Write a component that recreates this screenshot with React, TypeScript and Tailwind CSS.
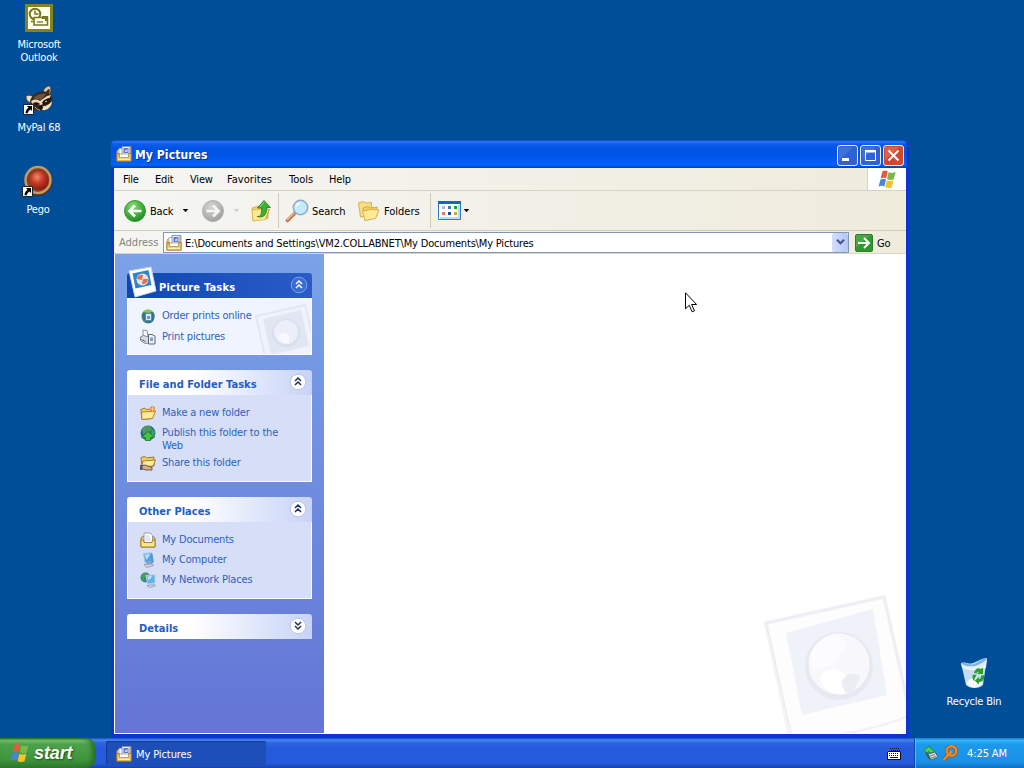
import React from "react";

const PicturesIcon = ({ className = "size-4" }: { className?: string }) => (
  <svg viewBox="0 0 16 16" className={className}>
    <path d="M1 5l1.500-1.500H5V2h2V.5h8V12H1z" fill="#e9cf95" stroke="#b9954f" strokeWidth=".8" />
    <path d="M3 2.500h4.500v6.500H3z" fill="#fff" stroke="#9aa1b8" strokeWidth=".7" />
    <path d="M6 .5h8V9H6z" fill="#eef1fc" stroke="#7f89b0" strokeWidth=".9" />
    <path d="M7.500 2h5v5h-5z" fill="#5a78c6" />
    <path d="M9 4.500L11.500 3v3H9z" fill="#c4d5f7" />
    <path d="M.8 7.500h2.400V10h9.300V7.500h2.700v7.700H.8z" fill="#f4c968" stroke="#a8752a" strokeWidth=".9" />
    <path d="M3.500 8h9v3.500h-9z" fill="#fffef8" stroke="#9c8a62" strokeWidth=".7" />
    <path d="M2 13.400h12" stroke="#fff0b5" strokeWidth="1.200" />
  </svg>
);

const WindowsFlag = ({ className }: { className: string }) => (
  <svg viewBox="0 0 20 20" className={className}>
    <path d="M4.600 1.500C6.800.2 8.700.4 10.300 1.600L8.600 9C7.200 7.900 5.200 7.800 2.800 9z" fill="#dd5f3c" />
    <path d="M11.200 2.100c2.100 1.200 4.100 1.300 7.300.1l-1.900 7.500c-2.300 1.100-4.800 1-7-.2z" fill="#76b944" />
    <path d="M2.500 10.200c2.100-1.200 4.100-1.200 5.900-.1l-1.700 7.200C5 16.200 3 16.200.7 17.400z" fill="#4a84de" />
    <path d="M9.300 10.700c2.100 1.200 4.600 1.200 7 .1l-1.800 7.500c-2.300 1.100-4.800 1-6.900-.3z" fill="#f5c32c" />
  </svg>
);

const Shortcut = () => (
  <svg viewBox="0 0 11 11" className="absolute bottom-0 -left-px size-[11px]">
    <path d="M.5.500h10v10H.5z" fill="#fff" stroke="#222" />
    <path d="M4 2h5v5L7.500 5.500C6 6.500 5 7.500 4.500 9.500L2.500 9C2.500 6.800 3.800 5 5.500 3.700z" fill="#000" />
  </svg>
);

const OutlookIcon = () => (
  <svg viewBox="0 0 28 28" className="size-7">
    <path d="M0 0h28v28H0z" fill="#84841a" />
    <path d="M3 3h22v22H3z" fill="#fffff0" />
    <circle cx="10" cy="10" r="5.300" fill="#fffff0" stroke="#77771a" strokeWidth="2" />
    <path d="M10 6.500V10h3.500" fill="none" stroke="#77771a" strokeWidth="1.500" />
    <path d="M9 13.500h13.500v7.500H9z" fill="#fffff0" stroke="#77771a" strokeWidth="1.600" />
    <path d="M17 12h6v5h-3v-2h-3z" fill="#77771a" />
    <path d="M12 18h6" stroke="#77771a" strokeWidth="1.300" />
    <path d="M6 17.500h2" stroke="#77771a" strokeWidth="1.300" />
  </svg>
);

const RaccoonIcon = () => (
  <svg viewBox="0 0 30 30" className="size-[30px]">
    <path d="M19 6c2-4 5-5.500 7-5 1.500 2 1.300 6-.5 10z" fill="#d6c8aa" stroke="#4d3a2c" />
    <path d="M22 7c1-2 2.500-3 3.500-3 .5 2 0 4-1 5.500z" fill="#3a2a22" />
    <path d="M2 11c2-1.500 5-1 8 1l-4 6C3 16.500 1.500 13.500 2 11z" fill="#e9dec5" stroke="#4d3a2c" />
    <path d="M6 16C8 9 14 6 20 6.500c6 .5 9 5 8.500 10-.5 5-4 8-9 9-6 1-12 0-13-4z" fill="#3d2a1f" />
    <path d="M9 13c4-4 9-5 13-4l-5 6z" fill="#6d533e" />
    <path d="M7 17c2-3 5-3 9-1l7-5 4-1-3 6-7 4-8-1z" fill="#e8d8b7" />
    <path d="M9 18c3-1.500 5-.8 7 1-3 2-5.500 1.500-7-1zM18 18c1-3 5-5 9-5 0 4-3 7-7 7z" fill="#21140f" />
    <path d="M17 21c4 1 8-1 11-5 0 6-5 10-10 9z" fill="#efdfbc" />
    <circle cx="17" cy="22.500" r="2" fill="#111" />
    <path d="M11 22c1 2 3 3 5 3" stroke="#c9a06f" fill="none" />
    <circle cx="22" cy="16.500" r=".8" fill="#eee" />
  </svg>
);

const PegoIcon = () => (
  <svg viewBox="0 0 30 32" className="h-8 w-[30px]">
    <defs>
      <radialGradient id="pego" cx=".4" cy=".32" r=".7">
        <stop offset="0" stopColor="#f58a72" />
        <stop offset=".45" stopColor="#c73a28" />
        <stop offset="1" stopColor="#87180f" />
      </radialGradient>
    </defs>
    <ellipse cx="15.500" cy="16" rx="14" ry="14.800" fill="#5d2f17" />
    <ellipse cx="15" cy="15" rx="12.500" ry="13" fill="#84401f" stroke="#c49a6b" strokeWidth="2.500" />
    <circle cx="16" cy="15.500" r="9.500" fill="url(#pego)" />
  </svg>
);

const RecycleIcon = () => (
  <svg viewBox="0 0 28 32" className="h-8 w-7">
    <path d="M1 6c5-2 8 2 12 0 4-1 8-5 14-5l-4 27c-4 4-13 4-17 0z" fill="#c3ddf2" />
    <path d="M1 6c6-1 8 3 13 1s8-6 13-6l-2 7c-8 4-17 3-23 0z" fill="#7fb0e0" />
    <path d="M1 6c5 5 17 5 26-4l-1 9C18 14 9 14 2 11z" fill="#eff8ff" opacity=".85" />
    <path d="M6 26c5-7 13-7 17 0-4 6-13 6-17 0z" fill="#fff" opacity=".85" />
    <path d="M14 16c1-4 4-6 7-4l2-1.500V17h-6l2-2c-1-.8-2 0-2.500 1.500z" fill="#2f9e2b" />
    <path d="M24 18c1 5-2 7-5 7v2.500L14.500 23.500 19 20v2.200c1.500-.2 2-1.700 2-3.500z" fill="#2f9e2b" />
    <path d="M13 17.500l3.500.5-1.500 3-1 3c-1.500-1.500-2-4-1-6.500z" fill="#2f9e2b" />
  </svg>
);

const DesktopIcon = ({ label, children }: { label: string; children: React.ReactNode }) => (
  <div className="flex w-19 flex-col items-center gap-1.5 text-center leading-[13px] text-white">
    <div className="relative">{children}</div>
    <span className="w-15">{label}</span>
  </div>
);

const RoundArrow = ({ back = false }: { back?: boolean }) => (
  <svg viewBox="0 0 22 22" className="size-[22px]">
    <defs>
      <radialGradient id={back ? "back" : "forward"} cx=".4" cy=".3" r=".75">
        <stop offset="0" stopColor={back ? "#8fdc7e" : "#d5d5d3"} />
        <stop offset=".6" stopColor={back ? "#3fae36" : "#b6b6b4"} />
        <stop offset="1" stopColor={back ? "#1f831f" : "#9a9a98"} />
      </radialGradient>
    </defs>
    <circle cx="11" cy="11" r="10.500" fill={back ? "url(#back)" : "url(#forward)"} stroke={back ? "#3a963a" : "#b0b0ae"} />
    {back ? (
      <path d="M17.500 11H6M11 5.500L5.500 11l5.500 5.500" fill="none" stroke="#fff" strokeWidth="2.600" />
    ) : (
      <path d="M4.500 11H16M11 5.500l5.500 5.500-5.500 5.500" fill="none" stroke="#f6f6f4" strokeWidth="2.600" />
    )}
  </svg>
);

const Caret = ({ className }: { className: string }) => (
  <svg viewBox="0 0 7 4" className={`h-1 w-[7px] ${className}`}>
    <path d="M1 0h5L3.500 3z" fill="currentColor" stroke="currentColor" strokeWidth=".4" />
  </svg>
);

const UpFolderIcon = () => (
  <svg viewBox="0 0 21 24" className="h-6 w-[21px]">
    <path d="M1 9l6-2 1.500 1.500L17 7v12L2 22z" fill="#f1cf5c" stroke="#d3ab45" strokeWidth=".8" />
    <path d="M2 22L1 11l11-1 6 .5-3 10z" fill="#fbe88f" stroke="#d9b552" strokeWidth=".8" />
    <path d="M15 20l3.500-10" stroke="#c79d34" />
    <path d="M6 17.500c4 .5 5-3 4.500-8.500H6.500l6.500-7.500 6.500 7h-4c.5 6-2 11-9.500 9z" fill="#3fae35" stroke="#1f7b1d" strokeWidth=".8" />
    <path d="M9 8l4-4.500" stroke="#8bdc7c" />
  </svg>
);

const SearchIcon = () => (
  <svg viewBox="0 0 24 24" className="size-6">
    <path d="M2.500 21.500L10 14" stroke="#b87b50" strokeWidth="3.600" strokeLinecap="round" />
    <path d="M2.500 20.500L9 14" stroke="#e9b891" strokeWidth="1.500" strokeLinecap="round" />
    <circle cx="15.500" cy="8.500" r="7.200" fill="#c4eafb" stroke="#8fa9cf" strokeWidth="1.500" />
    <path d="M10.500 9c0-4 3-6 6-5-2 1-4 2-6 5z" fill="#fff" />
  </svg>
);

const FoldersIcon = () => (
  <svg viewBox="0 0 24 22" className="h-[22px] w-6">
    <path d="M1.500 3l5-1.500L8.500 3l6-.5V15l-11 2z" fill="#f8df80" stroke="#d3aa48" strokeWidth=".9" />
    <path d="M6 8l5-1.500L13 8l7-1v9L8 20.500z" fill="#f3d160" stroke="#cfa540" strokeWidth=".9" />
    <path d="M8 20.500L5.500 11 14 9.500l8 .5-3.500 8.500z" fill="#fdeb96" stroke="#d3aa48" strokeWidth=".9" />
  </svg>
);

const ViewsIcon = () => (
  <svg viewBox="0 0 23 19" className="h-[19px] w-[23px]">
    <path d="M.5.500h22v18H.5z" fill="#fff" stroke="#2d79c4" />
    <path d="M0 0h23v3H0z" fill="#1767b5" />
    <path d="M20 4h2v14h-2zM2 16h19v2H2z" fill="#b9dcf7" />
    <path d="M4 5h3v3H4z" fill="#a9b5e8" />
    <path d="M10 5h3v3h-3z" fill="#4774c5" />
    <path d="M16 5h3v3h-3z" fill="#279635" />
    <path d="M4 11h3v3H4z" fill="#e8775c" />
    <path d="M10 11h3v3h-3z" fill="#174c94" />
    <path d="M16 11h3v3h-3z" fill="#d3a23d" />
  </svg>
);

const Separator = () => <div className="h-[35px] w-px bg-[#cfcbbb]" />;

const TitleBar = () => (
  <div className="flex h-7 items-center rounded-t-[5px] bg-[linear-gradient(#0a4fc4_0,#2a7cf8_6%,#0d5cea_14%,#0054e3_30%,#0056ea_60%,#0163fb_88%,#0144c0_100%)] pr-[5px] pl-[5px] shadow-[inset_-2px_0_2px_#0838b8]">
    <PicturesIcon className="size-4" />
    <span className="mt-[3px] ml-[3px] text-[12px] font-bold tracking-[0.1px] text-white [text-shadow:1px_1px_#0a2f92]">
      My Pictures
    </span>
    <div className="mt-0.5 ml-auto flex gap-0.5">
      <svg viewBox="0 0 21 21" className="size-[21px]">
        <rect x=".5" y=".5" width="20" height="20" rx="2.500" fill="#2f62d8" stroke="#e8eefc" />
        <path d="M2 2h14L2 15z" fill="#6f9bf3" opacity=".25" />
        <path d="M5 13h7v3H5z" fill="#fff" />
      </svg>
      <svg viewBox="0 0 21 21" className="size-[21px]">
        <rect x=".5" y=".5" width="20" height="20" rx="2.500" fill="#2f62d8" stroke="#e8eefc" />
        <path d="M2 2h14L2 15z" fill="#6f9bf3" opacity=".25" />
        <path d="M5.500 6v9.500h10V6" fill="none" stroke="#fff" />
        <path d="M5 5h11v2.500H5z" fill="#fff" />
      </svg>
      <svg viewBox="0 0 21 21" className="size-[21px]">
        <rect x=".5" y=".5" width="20" height="20" rx="2.500" fill="#d2482f" stroke="#fbeae6" />
        <path d="M2 2h14L2 15z" fill="#f0987d" opacity=".35" />
        <path d="M5.500 5.500l10 10M15.500 5.500l-10 10" stroke="#fff" strokeWidth="2.100" />
      </svg>
    </div>
  </div>
);

const MenuBar = () => (
  <div className="flex h-[23px] border-b border-[#d6d2c2] bg-linear-to-r from-[#f5f5f3] to-[#efecdc]">
    <div className="flex items-center pl-[9px] text-black">
      <span className="w-8">File</span>
      <span className="w-[35px]">Edit</span>
      <span className="w-[37px]">View</span>
      <span className="w-[62px] tracking-[0.05px]">Favorites</span>
      <span className="w-10 tracking-normal">Tools</span>
      <span>Help</span>
    </div>
    <div className="ml-auto flex w-[39px] items-center justify-center border-l border-[#d6d2c2] bg-white">
      <WindowsFlag className="size-[19px]" />
    </div>
  </div>
);

const ToolBar = () => (
  <div className="flex h-10 items-center border-b border-[#d0ccbc] bg-linear-to-r from-[#f5f5f3] to-[#efecdc] pl-2.5 text-black">
    <RoundArrow back />
    <span className="mt-px ml-1 w-8">Back</span>
    <Caret className="text-black" />
    <div className="ml-[13px]">
      <RoundArrow />
    </div>
    <Caret className="mr-[11px] ml-[9px] text-[#cfcec8]" />
    <UpFolderIcon />
    <div className="ml-1.5">
      <Separator />
    </div>
    <div className="ml-1.5">
      <SearchIcon />
    </div>
    <span className="mt-px ml-[3px] w-[45px] tracking-[-0.1px]">Search</span>
    <FoldersIcon />
    <span className="mt-px ml-[3px] w-[46px] tracking-[-0.02px]">Folders</span>
    <Separator />
    <div className="ml-[7px]">
      <ViewsIcon />
    </div>
    <Caret className="ml-0.5 text-black" />
  </div>
);

const AddressBar = () => (
  <div className="flex h-[23px] items-center border-b border-[#d8d5c8] bg-linear-to-r from-[#f5f5f3] to-[#efecdc] pl-[5px] text-black">
    <span className="mt-px w-11 tracking-normal text-[#85857d]">Address</span>
    <div className="flex h-[21px] w-[686px] items-center border border-[#8198b3] bg-white pl-0.5">
      <PicturesIcon className="mt-0.5 size-4" />
      <span className="mt-[3px] ml-[3px] tracking-[-0.17px]">
        E:\Documents and Settings\VM2.COLLABNET\My Documents\My Pictures
      </span>
      <div className="ml-auto flex h-[19px] w-4 items-center justify-center rounded-xs bg-linear-to-r from-[#d3defc] to-[#b3c6f6]">
        <svg viewBox="0 0 9 6" className="h-1.5 w-[9px]">
          <path d="M1 .8l3.500 3.500L8 .8" fill="none" stroke="#3f5490" strokeWidth="2" />
        </svg>
      </div>
    </div>
    <svg viewBox="0 0 18 18" className="mt-px ml-1.5 size-[18px]">
      <rect x=".5" y=".5" width="17" height="17" rx="1.500" fill="#319531" stroke="#2b7d2b" />
      <path d="M1 1h15L1 14z" fill="#83cc76" opacity=".3" />
      <path d="M3 9h11M9 4l5 5-5 5" fill="none" stroke="#fff" strokeWidth="2" />
    </svg>
    <span className="mt-0.5 ml-1">Go</span>
  </div>
);

const Chevron = ({ dark = false, down = false }: { dark?: boolean; down?: boolean }) => (
  <svg viewBox="0 0 18 18" className="size-[18px]">
    <circle cx="9" cy="9" r="7.800" fill={dark ? "#3a6ccf" : "#fff"} stroke={dark ? "#7fa0e6" : "#b9c3df"} />
    <path
      d={down ? "M6 5l3 3 3-3M6 9l3 3 3-3" : "M6 8l3-3 3 3M6 12l3-3 3 3"}
      fill="none"
      stroke={dark ? "#fff" : "#1f2f66"}
      strokeWidth="1.500"
    />
  </svg>
);

const OrderIcon = () => (
  <svg viewBox="0 0 16 16" className="size-4">
    <ellipse cx="8" cy="8.500" rx="6.500" ry="7" fill="#3f8d72" />
    <path d="M2 6c1 6 4 9 8 9 4-1 5-5 4-10l-4-2z" fill="#3b6f92" />
    <path d="M3.500 3.500C5 1 11 1 12.500 3.500L9 5 5 4.500z" fill="#8acb45" />
    <path d="M5.500 5.500h6v7h-6z" fill="#d8edf7" stroke="#4d8fa3" />
    <path d="M7 8h3v3H7z" fill="#5e9ac6" />
  </svg>
);

const PrintIcon = () => (
  <svg viewBox="0 0 16 16" className="size-4">
    <path d="M3 1l4 .5 1 6-5 .5z" fill="#f6f8fb" stroke="#8c93a0" />
    <path d="M.5 8l3-1.500L9 8v6l-4 .5-4.500-3z" fill="#d6dbe4" stroke="#777e8c" strokeWidth=".9" />
    <path d="M8.500 5.500H12L15 7v8H8.500z" fill="#eef2f8" stroke="#5e6675" />
    <path d="M10 8.500h3V12h-3z" fill="#8b9cb9" />
    <path d="M1.500 10.500l4 2" stroke="#555d6c" />
  </svg>
);

const NewFolderIcon = () => (
  <svg viewBox="0 0 16 16" className="size-4">
    <path d="M.8 4.500L5 3l1.500 1.500L12 4v9.500L2 14.500z" fill="#f3cf62" stroke="#9d7420" strokeWidth=".9" />
    <path d="M2 14.500L1.500 7 11 6.500l4.500-.5-3 7.500z" fill="#fdea95" stroke="#a77d25" strokeWidth=".9" />
    <circle cx="12.500" cy="4" r="2.700" fill="#ef8442" />
    <path d="M12.500 2v4M10.500 4h4" stroke="#fbd29b" strokeWidth=".9" />
  </svg>
);

const PublishIcon = () => (
  <svg viewBox="0 0 16 16" className="size-4">
    <circle cx="8" cy="8" r="7.500" fill="#2b6f86" />
    <path d="M2 4c2-3 6-4 8-3l2 4-4 3-5 1zM12 4l3 3-1 5-3-2z" fill="#4a9d5f" />
    <path d="M8 6.500l6.500 6H10.500V15.500h-5v-3h-4z" fill="#45c440" stroke="#1c7b23" strokeWidth=".8" />
  </svg>
);

const ShareIcon = () => (
  <svg viewBox="0 0 16 16" className="size-4">
    <path d="M1 2.500L5 1.500 6.500 3 14 2v9L2 12z" fill="#f3cf62" stroke="#8f6d1f" strokeWidth=".9" />
    <path d="M2 12L3 6l12.500-1L13 11z" fill="#fdec9b" stroke="#9a7726" strokeWidth=".9" />
    <path d="M1 11l4-1 7 2.500V15H6l-5-1.500z" fill="#d9b186" stroke="#55402a" strokeWidth=".8" />
    <path d="M0 10h2.500v5H0z" fill="#4d5a78" />
  </svg>
);

const DocumentsIcon = () => (
  <svg viewBox="0 0 16 16" className="size-4">
    <path d="M1 6l2-1.500h10l2 1.500v9H1z" fill="#f3d264" stroke="#a17c22" />
    <path d="M4 1h6l2.500 2.500V11H4z" fill="#fff" stroke="#8c93a5" strokeWidth=".9" />
    <path d="M5.500 4h4M5.500 6h5M5.500 8h5" stroke="#b3bfd8" strokeWidth=".8" />
    <path d="M1 8h2.500L4 10.500h8L12.500 8H15v7H1z" fill="#fbe48a" stroke="#a17c22" strokeWidth=".9" />
  </svg>
);

const ComputerIcon = () => (
  <svg viewBox="0 0 16 16" className="size-4">
    <path d="M3.500 1.500L12 .8l1.500 9-8.500.7z" fill="#4ea4e6" stroke="#b3c0dc" />
    <path d="M4.500 2.500l6-.5-4 6z" fill="#b5e0fb" />
    <path d="M11 2l1.500.5 1 8-2 1z" fill="#5a8fcb" />
    <path d="M7 10.500l4-.5.500 2H7zM4 12.500l8-1 1.500 2-7 2z" fill="#d5d9e6" stroke="#7785a6" strokeWidth=".7" />
  </svg>
);

const NetworkIcon = () => (
  <svg viewBox="0 0 16 16" className="size-4">
    <circle cx="5.500" cy="5.500" r="5" fill="#2f72bd" />
    <path d="M1 4c1-3 4-4 6-3l1 3-4 2 1 3-2 1z" fill="#42a847" />
    <path d="M6 3.500l9-.8v8.500l-7.500.8z" fill="#5bb4ee" stroke="#c2cde3" />
    <path d="M7.500 4.500l5-.5-4 4.500z" fill="#bfe6fc" />
    <path d="M7 13.500l7-.8 1.500 1-6 1.800z" fill="#dfe3ee" stroke="#7785a6" strokeWidth=".7" />
  </svg>
);

const TaskRow = ({ icon, label }: { icon: React.ReactNode; label: string }) => (
  <div className="flex gap-1.5">
    <div className="pt-px">{icon}</div>
    <span className="max-w-[125px] pt-0.5 leading-[13px] tracking-[-0.18px] whitespace-normal">{label}</span>
  </div>
);

const PanelHeader = ({ label, down = false }: { label: string; down?: boolean }) => (
  <div className="flex h-[25px] items-center justify-between rounded-t-[3px] bg-linear-to-r from-white from-35% to-[#c7d3f7] pr-[5px] pl-3">
    <span className="pt-[3px] font-bold tracking-[0.03px] text-[#215dc6]">{label}</span>
    <div className="mb-0.5">
      <Chevron down={down} />
    </div>
  </div>
);

const Polaroid = ({ className }: { className: string }) => (
  <svg viewBox="0 0 144 140" className={className}>
    <path d="M4 30L122 4l30 134-119 30z" fill="#fdfdfe" stroke="#f4f4f8" strokeWidth="4" />
    <path d="M4 30L122 4l24 106M4 30l27 118" fill="none" stroke="#e8e9ef" strokeWidth="1" />
    <path d="M31 146q70-4 113-22" fill="none" stroke="#f0f0f5" strokeWidth="2" />
    <path d="M24 40L111 16l14 86-85 20z" fill="#f0f2f9" />
    <circle cx="77" cy="73" r="34" fill="#e7e9f1" />
    <circle cx="77" cy="71" r="30.500" fill="#f7f7fc" />
    <path d="M58 86c0-10 16-14 26-4l-1 19c-14 2-22-5-25-15z" fill="#fff" />
    <path d="M80 88c4-8 12-8 18-6-2 10-5 16-13 18-4-2-5-8-5-12z" fill="#ebedf5" />
    <path d="M48 66c2-14 14-24 28-24l10 8-14 22-22 6z" fill="#fcfcff" />
  </svg>
);

const Sidebar = () => (
  <aside className="flex w-[210px] flex-col gap-[15px] border-l border-white bg-linear-to-b from-[#7ba2e7] to-[#6375d6] pt-[19px] pr-3 pl-3 text-[#2c5fbd]">
    <section>
      <div className="relative flex h-[25px] items-center justify-between rounded-t-[3px] bg-linear-to-r from-[#0d47b3] to-[#2a5cc8] pr-1 pl-8">
        <svg viewBox="0 0 30 32" className="absolute -top-[7px] left-0 h-8 w-[30px]">
          <path d="M2 5l22-4 5 24-21 6z" fill="#fff" stroke="#c7d6ee" />
          <path d="M5.500 7.500L21.500 4l3 15-16 3.500z" fill="#2f86cc" />
          <circle cx="15.500" cy="13.500" r="6" fill="#f1e1da" />
          <path d="M10 13c0-3 3-5 6-4l-1 5zM15 18l1-5 5 0c0 3-2 5-6 5z" fill="#d97354" />
        </svg>
        <span className="pt-[3px] font-bold tracking-[0.2px] text-white">Picture Tasks</span>
        <div className="mb-0.5">
          <Chevron dark />
        </div>
      </div>
      <div className="relative flex h-[57px] flex-col gap-1 overflow-hidden border border-t-0 border-white bg-[#f0f4fe] pt-[9px] pl-3">
        <svg viewBox="0 0 56 50" className="absolute right-0 bottom-0 h-[50px] w-14">
          <path d="M1 12L50 1l12 50-50 11z" fill="#f0f3fc" stroke="#e2e7f3" strokeWidth="2" />
          <path d="M8 15l38-9 8 36-38 9z" fill="#e1e6f3" />
          <circle cx="31" cy="29" r="14" fill="#d9deed" />
          <circle cx="31" cy="28" r="12" fill="#eceffa" />
          <path d="M23 33c3-5 8-5 11-1v8c-6 0-9-3-11-7z" fill="#f8f9fe" />
        </svg>
        <TaskRow icon={<OrderIcon />} label="Order prints online" />
        <TaskRow icon={<PrintIcon />} label="Print pictures" />
      </div>
    </section>

    <section>
      <PanelHeader label="File and Folder Tasks" />
      <div className="flex h-[87px] flex-col gap-[3px] border border-t-0 border-white bg-[#d6dff7] pt-[9px] pl-3">
        <TaskRow icon={<NewFolderIcon />} label="Make a new folder" />
        <div className="h-[26px]">
          <TaskRow icon={<PublishIcon />} label="Publish this folder to the Web" />
        </div>
        <div className="pt-px">
          <TaskRow icon={<ShareIcon />} label="Share this folder" />
        </div>
      </div>
    </section>

    <section>
      <PanelHeader label="Other Places" />
      <div className="flex h-[77px] flex-col gap-[3px] border border-t-0 border-white bg-[#d6dff7] pt-[9px] pl-3">
        <TaskRow icon={<DocumentsIcon />} label="My Documents" />
        <TaskRow icon={<ComputerIcon />} label="My Computer" />
        <TaskRow icon={<NetworkIcon />} label="My Network Places" />
      </div>
    </section>

    <section>
      <PanelHeader label="Details" down />
    </section>
  </aside>
);

const Taskbar = () => (
  <footer className="flex h-[30px] items-stretch bg-[linear-gradient(#1c4fc8_0,#4585f0_7%,#2f65df_16%,#245adc_35%,#245bdb_85%,#1941a5_100%)] text-white">
    <div className="flex w-24 items-center rounded-r-[10px] bg-[linear-gradient(#2f7030_0,#7cc47b_8%,#4da14d_20%,#3f963d_70%,#2f7a2f_100%)] pl-2.5 shadow-[inset_-4px_0_5px_#2a6f2a]">
      <WindowsFlag className="size-5" />
      <span className="ml-1 font-['Liberation_Sans',sans-serif] text-[18px] font-bold tracking-[-0.1px] italic [text-shadow:1px_1px_2px_#1c4a1c]">
        start
      </span>
    </div>
    <div className="my-[3px] ml-2.5 flex w-40 items-center rounded-xs bg-[#1e4fb9] pl-2.5 shadow-[inset_1px_1px_1px_#123a91]">
      <PicturesIcon className="mt-0.5 size-4" />
      <span className="mt-0.5 ml-1 tracking-[-0.1px]">My Pictures</span>
    </div>
    <svg viewBox="0 0 14 13" className="mt-[9px] mr-[13px] ml-auto h-[13px] w-3.5">
      <path d="M0 4h14v8H0z" fill="#fff" />
      <path d="M.5 4.500h13v8H.5z" fill="none" stroke="#111" />
      <path d="M2 6.500h10M2 8.500h10" stroke="#111" strokeDasharray="1 1" />
      <path d="M3 10.500h8" stroke="#111" />
      <path d="M3 1.500h9M4 3.500h9" stroke="#111" strokeDasharray="1 1" />
    </svg>
    <div className="flex w-[110px] items-center border-l border-[#0b4cae] bg-[linear-gradient(#1277d2_0,#33b6f5_8%,#1c9aec_20%,#1a8fe8_80%,#0f6fc4_100%)] pl-2 shadow-[inset_1px_0_#46c0f5]">
      <svg viewBox="0 0 16 16" className="size-4">
        <path d="M5 9l7-2 3 5-7 3z" fill="#d7dde2" stroke="#45505b" strokeWidth=".8" />
        <path d="M7 11l5-1.500M8 13l5-1.500" stroke="#6d7c87" />
        <path d="M1 5l6-4 .5 2.500 4 3-3 1.500L5 6.500 4 8z" fill="#48d847" stroke="#187b25" strokeWidth=".7" />
        <path d="M3 8l4 6" stroke="#3b5a33" strokeWidth="1.500" />
      </svg>
      <svg viewBox="0 0 16 16" className="ml-[3px] size-4">
        <circle cx="9.500" cy="6" r="4.800" fill="none" stroke="#8a480c" strokeWidth="3.400" />
        <path d="M6.500 9.500L1.500 15" stroke="#8a480c" strokeWidth="3.400" />
        <circle cx="9.500" cy="6" r="4.800" fill="none" stroke="#f58a1f" strokeWidth="2.400" />
        <path d="M6.500 9.500L1.500 15M9.500 6l-2 3" stroke="#f58a1f" strokeWidth="2.400" />
      </svg>
      <span className="ml-[9px] tracking-[-0.1px]">4:25 AM</span>
    </div>
  </footer>
);

const App = () => {
  return (
    <div className="flex h-screen w-screen flex-col overflow-hidden bg-[#004e98] font-['DejaVu_Sans_Condensed','DejaVu_Sans',sans-serif] text-[11px] leading-[13px] tracking-[-0.2px] whitespace-nowrap">
      <main className="relative flex-1 overflow-hidden">
        <div className="absolute top-1 left-px whitespace-normal">
          <DesktopIcon label="Microsoft Outlook">
            <OutlookIcon />
          </DesktopIcon>
        </div>
        <div className="absolute top-[85px] left-px">
          <DesktopIcon label="MyPal 68">
            <RaccoonIcon />
            <Shortcut />
          </DesktopIcon>
        </div>
        <div className="absolute top-[165px] left-0">
          <DesktopIcon label="Pego">
            <PegoIcon />
            <Shortcut />
          </DesktopIcon>
        </div>
        <div className="absolute top-[657px] left-[936px]">
          <DesktopIcon label="Recycle Bin">
            <RecycleIcon />
          </DesktopIcon>
        </div>

        <div className="absolute top-[140px] left-[111px] flex h-[598px] w-[798px] flex-col rounded-t-md bg-[#0a36cf]">
          <TitleBar />
          <div className="mr-[3px] mb-1 ml-[3px] flex flex-1 flex-col">
            <MenuBar />
            <ToolBar />
            <AddressBar />
            <div className="flex flex-1 border-b border-white bg-white">
              <Sidebar />
              <div className="flex flex-1 items-end justify-end overflow-hidden">
                <Polaroid className="h-[140px] w-36" />
              </div>
            </div>
          </div>
        </div>

        <svg viewBox="0 0 12 21" className="absolute top-[292px] left-[685px] h-[21px] w-3">
          <path d="M.5.800v16l3.700-3.500 3 6.500 2.300-1-2.900-6.300h5z" fill="#fff" stroke="#000" />
        </svg>
      </main>
      <Taskbar />
    </div>
  );
};

export default App;
